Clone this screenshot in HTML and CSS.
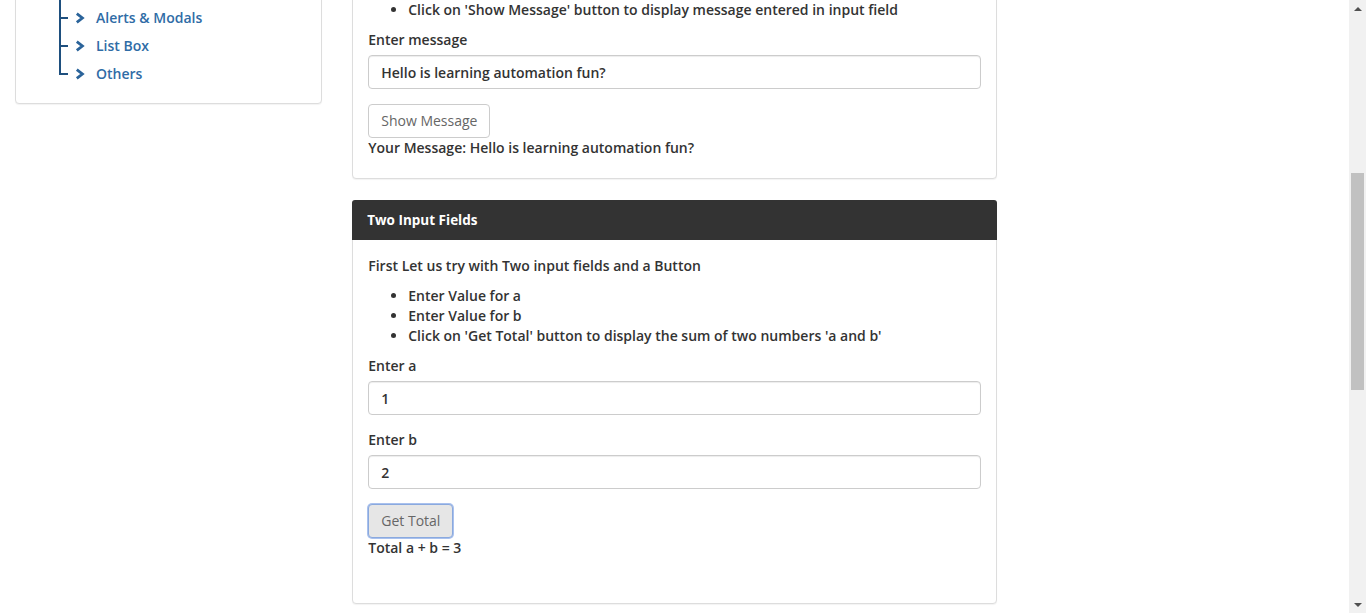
FILE: index.html
```html
<!DOCTYPE html>
<html lang="en">
<head>
<meta charset="utf-8">
<title>Simple Form Demo</title>
<link rel="stylesheet" href="styles.css">
</head>
<body>
<div class="viewport">
  <div class="page">
    <aside class="col col-side">
      <div class="panel side-panel">
        <ul class="tree">
          <li class="tree-item"><span class="tick"></span><svg class="chev" viewBox="0 0 10 12" width="10" height="12"><path d="M1.8 1.6 L7.4 6 L1.8 10.4" fill="none" stroke="currentColor" stroke-width="2.8" stroke-linejoin="miter"/></svg><a href="#">Alerts &amp; Modals</a></li>
          <li class="tree-item"><span class="tick"></span><svg class="chev" viewBox="0 0 10 12" width="10" height="12"><path d="M1.8 1.6 L7.4 6 L1.8 10.4" fill="none" stroke="currentColor" stroke-width="2.8" stroke-linejoin="miter"/></svg><a href="#">List Box</a></li>
          <li class="tree-item last"><span class="tick"></span><svg class="chev" viewBox="0 0 10 12" width="10" height="12"><path d="M1.8 1.6 L7.4 6 L1.8 10.4" fill="none" stroke="currentColor" stroke-width="2.8" stroke-linejoin="miter"/></svg><a href="#">Others</a></li>
        </ul>
      </div>
    </aside>
    <main class="col col-main">
      <section class="panel panel-first">
        <div class="panel-body body-first">
          <ul class="steps">
            <li>Click on 'Show Message' button to display message entered in input field</li>
          </ul>
          <div class="form-group">
            <label class="label">Enter message</label>
            <input class="input" type="text" value="Hello is learning automation fun?">
          </div>
          <button class="btn" type="button">Show Message</button>
          <div class="result">Your Message: <span>Hello is learning automation fun?</span></div>
        </div>
      </section>
      <section class="panel panel-second">
        <div class="panel-heading">Two Input Fields</div>
        <div class="panel-body body-second">
          <p class="intro">First Let us try with Two input fields and a Button</p>
          <ul class="steps">
            <li>Enter Value for a</li>
            <li>Enter Value for b</li>
            <li>Click on 'Get Total' button to display the sum of two numbers 'a and b'</li>
          </ul>
          <div class="form-group">
            <label class="label">Enter a</label>
            <input class="input" type="text" value="1">
          </div>
          <div class="form-group">
            <label class="label">Enter b</label>
            <input class="input" type="text" value="2">
          </div>
          <button class="btn btn-active" type="button">Get Total</button>
          <div class="result">Total a + b = <span>3</span></div>
        </div>
      </section>
    </main>
  </div>
  <div class="scrollbar">
    <div class="sb-arrow sb-up"></div>
    <div class="sb-track"><div class="sb-thumb"></div></div>
    <div class="sb-arrow sb-down"></div>
  </div>
</div>
</body>
</html>
```
FILE: styles.css
```css
* { box-sizing: border-box; }
html, body { margin: 0; padding: 0; height: 100%; overflow: hidden; }
body {
  font-family: "Open Sans", "Noto Sans", sans-serif;
  font-size: 14px;
  font-weight: 600;
  line-height: 20px;
  color: #333;
  background: #fff;
}
.viewport { display: flex; height: 613px; }
.page { flex: 1; display: flex; align-items: flex-start; }
.col { padding: 0 15px; }
.col-side { width: 25%; }
.col-main { width: 50%; }

.panel {
  background: #fff;
  border: 1px solid #ddd;
  border-radius: 4px;
  box-shadow: 0 1px 1px rgba(0,0,0,.05);
}
.side-panel {
  margin-top: -27px;
  padding: 30px 15px 15px 43px;
}
.tree {
  list-style: none;
  margin: 0;
  padding: 0;
  position: relative;
}
.tree::before {
  content: "";
  position: absolute;
  left: 0;
  top: -40px;
  height: 54px;
  width: 2px;
  background: #1e4f7e;
}
.tree-item {
  position: relative;
  display: flex;
  align-items: center;
  height: 28px;
}
.tree-item::before {
  content: "";
  position: absolute;
  left: 0;
  top: 0;
  width: 2px;
  height: 28px;
  background: #1e4f7e;
}
.tree-item.last::before { height: 15px; }
.tick {
  display: block;
  width: 9px;
  height: 2px;
  background: #1e4f7e;
  margin-right: 7px;
}
.chev { color: #2a639a; margin-right: 11px; flex: none; }
.tree-item a {
  color: #2f6ca6;
  text-decoration: none;
  font-weight: 600;
}

.panel-first {
  margin-top: -21px;
  margin-bottom: 21px;
}
.panel-body { padding: 15px; }
.body-first { padding-top: 20px; padding-bottom: 20px; }
.body-second { padding-top: 16px; padding-bottom: 45px; }
.steps { margin: 0 0 10px; padding-left: 40px; }
.intro { margin: 0 0 10px; }
.form-group { margin-bottom: 15px; }
.label { display: block; margin-bottom: 5px; font-weight: 600; }
.input {
  display: block;
  width: 100%;
  height: 34px;
  padding: 6px 12px;
  font: inherit;
  color: #333;
  border: 1px solid #ccc;
  border-radius: 4px;
  box-shadow: inset 0 1px 1px rgba(0,0,0,.075);
  background: #fff;
}
.btn {
  display: block;
  height: 34px;
  padding: 6px 12px;
  font-family: inherit;
  font-size: 14px;
  font-weight: 400;
  line-height: 20px;
  color: #666;
  background: #fff;
  border: 1px solid #ccc;
  border-radius: 4px;
}
.btn-active {
  background: #e6e6e6;
  border-color: #8aa9de;
  box-shadow: 0 0 0 1px #a9c1ee;
}
.result { font-weight: 600; }

.panel-heading {
  background: #333;
  color: #fff;
  padding: 10px 15px;
  font-weight: 700;
  font-size: 13.5px;
  border-radius: 3px 3px 0 0;
  margin: -1px -1px 0;
}

.scrollbar {
  width: 17px;
  flex: none;
  background: #f1f1f1;
  display: flex;
  flex-direction: column;
}
.sb-arrow { height: 17px; display: flex; align-items: center; justify-content: center; }
.sb-up::before {
  content: "";
  border-left: 4px solid transparent;
  border-right: 4px solid transparent;
  border-bottom: 4px solid #505050;
}
.sb-down::before {
  content: "";
  border-left: 4px solid transparent;
  border-right: 4px solid transparent;
  border-top: 4px solid #505050;
}
.sb-track { flex: 1; padding-top: 156px; }
.sb-thumb { margin: 0 2px; height: 217px; background: #c1c1c1; }
```
